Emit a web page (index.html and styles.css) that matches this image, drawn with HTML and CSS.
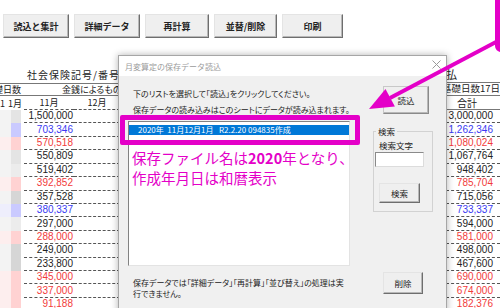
FILE: index.html
```html
<!DOCTYPE html>
<html lang="ja">
<head>
    <meta charset="UTF-8">
    <meta name="viewport" content="width=device-width, initial-scale=1.0">
    <title>月変算定の保存データ読込</title>
    <link rel="stylesheet" href="styles.css">
</head>
<body>
    <div class="toolbar">
        <button class="tool-btn w66">読込と集計</button>
        <button class="tool-btn w66">詳細データ</button>
        <button class="tool-btn w64">再計算</button>
        <button class="tool-btn w63">並替/削除</button>
        <button class="tool-btn w61">印刷</button>
    </div>

    <div class="sheet">
        <div class="sheet-left">
            <div class="cell"></div>
            <div class="cell title span2">社会保険記号/番号</div>

            <div class="cell days"><span>基礎日数</span></div>
            <div class="cell money span2">金銭によるもの</div>

            <div class="cell month-l"><span>1</span><span>1月</span></div>
            <div class="cell month dash">11月</div>
            <div class="cell month dash">12月</div>

            <div class="cell blur"><i class="lg"></i><i class="g1"></i></div>
            <div class="cell num dash">1,500,000</div><div class="cell dash"></div>
            <div class="cell blur"><i class="lg"></i><i class="bl"></i></div>
            <div class="cell num dash blue">703,346</div><div class="cell dash"></div>
            <div class="cell blur"><i class="lp"></i><i class="pk"></i></div>
            <div class="cell num dash red">570,518</div><div class="cell dash"></div>
            <div class="cell blur"><i class="lg"></i><i class="g1"></i></div>
            <div class="cell num dash">550,809</div><div class="cell dash"></div>
            <div class="cell blur"><i class="lg"></i><i class="g0"></i></div>
            <div class="cell num dash">519,402</div><div class="cell dash"></div>
            <div class="cell blur"><i class="lp"></i><i class="pk"></i></div>
            <div class="cell num dash red">392,852</div><div class="cell dash"></div>
            <div class="cell blur"><i class="lg"></i><i class="g2"></i></div>
            <div class="cell num dash">357,528</div><div class="cell dash"></div>
            <div class="cell blur"><i class="lb"></i><i class="bl"></i></div>
            <div class="cell num dash blue">380,337</div><div class="cell dash"></div>
            <div class="cell blur"><i class="lg"></i><i class="g0"></i></div>
            <div class="cell num dash">297,000</div><div class="cell dash"></div>
            <div class="cell blur"><i class="lp"></i><i class="pk"></i></div>
            <div class="cell num dash red">288,000</div><div class="cell dash"></div>
            <div class="cell blur"><i class="lg"></i><i class="g2"></i></div>
            <div class="cell num dash">249,000</div><div class="cell dash"></div>
            <div class="cell blur"><i class="lg"></i><i class="g2"></i></div>
            <div class="cell num dash">233,800</div><div class="cell dash"></div>
            <div class="cell blur"><i class="lp"></i><i class="pk"></i></div>
            <div class="cell num dash red">345,000</div><div class="cell dash"></div>
            <div class="cell blur"><i class="lp"></i><i class="pk"></i></div>
            <div class="cell num dash red">337,000</div><div class="cell dash"></div>
            <div class="cell blur"><i class="lp"></i><i class="pk"></i></div>
            <div class="cell num dash red">91,188</div><div class="cell dash"></div>
        </div>

        <div class="sheet-right">
            <div class="cell pay">払</div>
            <div class="cell base-days"><span>基礎日数17日</span></div>
            <div class="cell total">合計</div>
            <div class="cell num dash">3,000,000</div>
            <div class="cell num dash blue">1,262,346</div>
            <div class="cell num dash red">1,080,024</div>
            <div class="cell num dash">1,067,764</div>
            <div class="cell num dash">948,402</div>
            <div class="cell num dash red">785,704</div>
            <div class="cell num dash">715,056</div>
            <div class="cell num dash blue">733,337</div>
            <div class="cell num dash">594,000</div>
            <div class="cell num dash red">581,000</div>
            <div class="cell num dash">498,000</div>
            <div class="cell num dash">467,600</div>
            <div class="cell num dash red">690,000</div>
            <div class="cell num dash red">674,000</div>
            <div class="cell num dash red">182,376</div>
        </div>
    </div>

    <!-- dialog window over the sheet -->
    <div class="dialog">
        <div class="dialog-title">
            <span>月変算定の保存データ読込</span>
            <svg class="close" width="9" height="9" viewBox="0 0 9 9">
                <path d="M0.5 0.5 L8.5 8.5 M8.5 0.5 L0.5 8.5" stroke="#9a9a9a" stroke-width="1" fill="none"/>
            </svg>
        </div>
        <div class="dialog-body">
            <div class="main-col">
                <p class="intro">下のリストを選択して「読込」をクリックしてください。<br>保存データの読み込みはこのシートにデータが読み込まれます。</p>
                <div class="list-box">
                    <div class="list-item selected">2020年&nbsp;&nbsp;11月12月1月&nbsp;&nbsp;&nbsp;R2.2.20&nbsp;094835作成</div>
                    <p class="note">保存ファイル名は<b>2020</b>年となり、<br>作成年月日は和暦表示</p>
                </div>
                <p class="footnote">保存データでは「詳細データ」「再計算」「並び替え」の処理は実<br>行できません。</p>
            </div>
            <div class="side-col">
                <button class="dlg-btn load">読込</button>
                <fieldset class="search">
                    <legend>検索</legend>
                    <label for="keyword">検索文字</label>
                    <input type="text" id="keyword">
                    <button class="dlg-btn find">検索</button>
                </fieldset>
                <button class="dlg-btn delete">削除</button>
            </div>
        </div>
        <div class="highlight"></div>
    </div>

    <div class="callout"></div>
    <svg class="arrow" width="500" height="308" viewBox="0 0 500 308">
        <line x1="496" y1="42" x2="390" y2="98" stroke="#e400c8" stroke-width="4"/>
        <polygon points="369,109 385.5,89 394.9,106.6" fill="#e400c8"/>
    </svg>
</body>
</html>
```

FILE: styles.css
```css
html, body {
    margin: 0;
    padding: 0;
    overflow: hidden;
}

body {
    width: 500px;
    height: 308px;
    position: relative;
    background-color: #fff;
    font-family: "Noto Sans CJK JP", sans-serif;
    color: #222;
}

/* top buttons */
.toolbar {
    display: flex;
    gap: 5px;
    padding: 14px 0 0 3px;
}

.tool-btn {
    height: 24px;
    padding: 0;
    font: bold 9px/1 "Noto Sans CJK JP", sans-serif;
    color: #222;
    background-color: #efefef;
    border: 1px solid;
    border-color: #e4e4e4 #6e6e6e #6e6e6e #e4e4e4;
    box-shadow: inset -1px -1px #b8b8b8;
}

.w66 { width: 66px; }
.w64 { width: 64px; }
.w63 { width: 63px; }
.w61 { width: 61px; }

/* sheet */
.sheet {
    display: flex;
    justify-content: space-between;
    margin-top: 28px;
}

.sheet-left,
.sheet-right {
    display: grid;
    grid-template-rows: 18px 12px 14px repeat(15, 13.43px);
}

.sheet-left {
    width: 120px;
    grid-template-columns: 24px 50px 46px;
}

.sheet-right {
    width: 54px;
    grid-template-columns: 54px;
    grid-template-rows: 16px 14px 14px repeat(15, 13.43px);
}

.cell {
    box-sizing: border-box;
    font-size: 9px;
    line-height: 1;
    display: flex;
    align-items: center;
    white-space: nowrap;
    overflow: hidden;
}

.span2 {
    grid-column: span 2;
}

.title {
    font-size: 10px;
    letter-spacing: 1px;
    padding-left: 3px;
    border-bottom: 1px solid #777;
}

.sheet-left > .cell:first-child {
    border-bottom: 1px solid #777;
}

.days {
    justify-content: flex-end;
    padding-right: 3px;
    border-bottom: 1px solid #777;
}

.days span {
    flex-shrink: 0;
}

.money {
    padding-left: 38px;
    font-feature-settings: "palt";
    border-bottom: 1px solid #777;
}

.month-l {
    justify-content: space-between;
    padding-right: 2px;
}

.month {
    justify-content: center;
}

.dash {
    border-bottom: 1px dashed #555;
}

.blur i {
    display: block;
    height: 100%;
}

.blur i:first-child { width: 11px; }
.blur i:last-child { width: 10px; }

.lg { background-color: #f3f3f3; }
.lp { background-color: #fdeeee; }
.lb { background-color: #eeeefc; }
.g0 { background-color: #ececec; }
.g1 { background-color: #e4e4e4; }
.g2 { background-color: #d6d6d6; }
.bl { background-color: #cacaff; }
.pk { background-color: #ffd2d2; }

.num {
    font-family: "Liberation Sans", sans-serif;
    font-size: 10px;
    justify-content: flex-end;
    padding-right: 1px;
}

.sheet-right .num {
    padding-right: 7px;
    border-left: 1px dotted #999;
}

.blue { color: #3a3af2; }
.red { color: #f23a3a; }

.pay {
    font-size: 11px;
}

.base-days {
    font-size: 9.5px;
    justify-content: flex-end;
    border-top: 1px solid #777;
    border-bottom: 1px solid #777;
}

.base-days span {
    flex-shrink: 0;
}

.total {
    font-size: 10px;
    padding-left: 11px;
    border-bottom: 1px solid #777;
}

/* dialog */
.dialog {
    position: absolute;
    left: 118px;
    top: 55px;
    width: 329px;
    height: 262px;
    box-sizing: border-box;
    border: 1px solid #a6a6a6;
    background-color: #f0f0f0;
    box-shadow: 0 0 7px rgba(0, 0, 0, 0.3);
    font-size: 8px;
    font-feature-settings: "palt";
}

.dialog-title {
    height: 20px;
    background-color: #fff;
    display: flex;
    align-items: center;
    justify-content: space-between;
    padding: 0 5px 0 6px;
    color: #9b9b9b;
    font-feature-settings: normal;
}

.close {
    margin-top: -3px;
}

.dialog-body {
    display: flex;
}

.main-col {
    width: 222px;
    padding-left: 9px;
}

.intro {
    margin: 10px 0 0;
    padding-left: 5px;
    line-height: 16px;
    white-space: nowrap;
}

.list-box {
    margin-top: 3px;
    height: 145px;
    box-sizing: border-box;
    background-color: #fff;
    border: 1px solid;
    border-color: #828282 #e3e3e3 #e3e3e3 #828282;
    padding-top: 3px;
}

.list-item {
    height: 10px;
    line-height: 10px;
    font-size: 8px;
    padding-left: 9px;
    white-space: nowrap;
    font-feature-settings: normal;
}

.selected {
    background-color: #0078d7;
    color: #fff;
}

.note {
    margin: 13px 0 0;
    padding-left: 3px;
    font-size: 14.5px;
    line-height: 20px;
    color: #e400c8;
    white-space: nowrap;
    font-feature-settings: normal;
}

.footnote {
    margin: 11px 0 0;
    padding-left: 5px;
    line-height: 11px;
    white-space: nowrap;
}

.side-col {
    padding-left: 23px;
    display: flex;
    flex-direction: column;
    align-items: flex-start;
}

.dlg-btn {
    padding: 0;
    font: 8.5px/1 "Noto Sans CJK JP", sans-serif;
    color: #222;
    background-color: #efefef;
    border: 1px solid;
    border-color: #e4e4e4 #6e6e6e #6e6e6e #e4e4e4;
    box-shadow: inset -1px -1px #b8b8b8;
}

.load {
    margin: 10px 0 0 10px;
    width: 46px;
    height: 28px;
    border-color: #c8c8c8 #8a8a8a #8a8a8a #c8c8c8;
}

.search {
    margin: 12px 0 0;
    width: 60px;
    height: 86px;
    box-sizing: border-box;
    padding: 4px 0 0;
    border: 1px solid #d2d2d2;
    display: flex;
    flex-direction: column;
    align-items: flex-start;
    font-size: 8.5px;
    font-feature-settings: normal;
}

.search legend {
    padding: 0 2px;
    margin-left: 2px;
    line-height: 10px;
}

.search label {
    margin-left: 5px;
    line-height: 10px;
}

.search input {
    margin: 2px 0 0 1px;
    width: 49px;
    height: 15px;
    box-sizing: border-box;
    padding: 0;
    border: 1px solid;
    border-color: #8a8a8a #dcdcdc #dcdcdc #8a8a8a;
    background-color: #fff;
}

.find {
    margin: 16px 0 0 5px;
    width: 41px;
    height: 20px;
}

.delete {
    margin: 60px 0 0 10px;
    width: 40px;
    height: 22px;
}

.highlight {
    position: absolute;
    left: 1px;
    top: 59px;
    width: 240px;
    height: 30px;
    box-sizing: border-box;
    border: 5px solid #e400c8;
    border-radius: 2px;
}

/* annotation */
.callout {
    position: absolute;
    left: 495px;
    top: -10px;
    width: 30px;
    height: 62px;
    box-sizing: border-box;
    border: 5px solid #e400c8;
    border-radius: 6px;
    background-color: #fff;
}

.arrow {
    position: absolute;
    left: 0;
    top: 0;
}
```
